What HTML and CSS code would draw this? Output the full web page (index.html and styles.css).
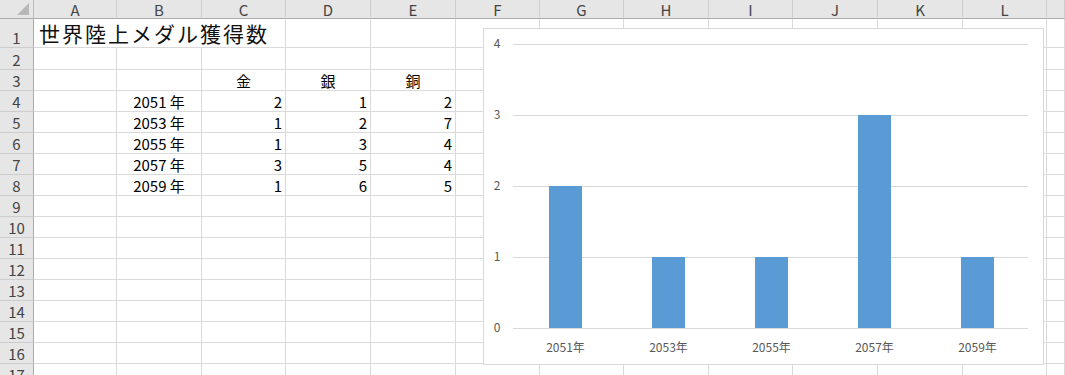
FILE: index.html
```html
<!DOCTYPE html>
<html lang="ja">
<head>
    <meta charset="UTF-8">
    <title>世界陸上メダル獲得数</title>
    <link rel="stylesheet" href="styles.css">
</head>
<body>
    <div class="sheet" id="sheet"></div>

    <!-- chart floats over the cells like an Excel chart object -->
    <div class="chart">
        <svg width="559" height="335" viewBox="0 0 559 335">
            <g class="grid">
                <line x1="29" y1="15.5" x2="544" y2="15.5"/>
                <line x1="29" y1="86.5" x2="544" y2="86.5"/>
                <line x1="29" y1="157.5" x2="544" y2="157.5"/>
                <line x1="29" y1="228.5" x2="544" y2="228.5"/>
                <line x1="29" y1="299.5" x2="544" y2="299.5"/>
            </g>
            <g class="ylab">
                <text x="13" y="19">4</text>
                <text x="13" y="90">3</text>
                <text x="13" y="161">2</text>
                <text x="13" y="232">1</text>
                <text x="13" y="303">0</text>
            </g>
            <g class="bars">
                <rect x="65" y="157" width="33" height="142"/>
                <rect x="168" y="228" width="33" height="71"/>
                <rect x="271" y="228" width="33" height="71"/>
                <rect x="374" y="86" width="33" height="213"/>
                <rect x="477" y="228" width="33" height="71"/>
            </g>
            <g class="xlab">
                <text x="81.5" y="323">2051年</text>
                <text x="184.5" y="323">2053年</text>
                <text x="287.5" y="323">2055年</text>
                <text x="390.5" y="323">2057年</text>
                <text x="493.5" y="323">2059年</text>
            </g>
        </svg>
    </div>

    <script>
        const cols = ['A', 'B', 'C', 'D', 'E', 'F', 'G', 'H', 'I', 'J', 'K', 'L', ''];

        // medal table: year, gold, silver, bronze
        const medals = [
            ['2051 年', 2, 1, 2],
            ['2053 年', 1, 2, 7],
            ['2055 年', 1, 3, 4],
            ['2057 年', 3, 5, 4],
            ['2059 年', 1, 6, 5]
        ];

        const sheet = document.getElementById('sheet');

        function addCell(cls, text) {
            const cell = document.createElement('div');
            cell.className = cls;
            if (text !== undefined) cell.textContent = text;
            sheet.appendChild(cell);
            return cell;
        }

        // column headers
        addCell('corner');
        cols.forEach(c => addCell('colhead', c));

        for (let r = 1; r <= 17; r++) {
            addCell('rowhead', r);

            if (r === 1) {
                // title overflows across A:C
                addCell('cell title', '世界陸上メダル獲得数');
                cols.slice(3).forEach(() => addCell('cell'));
                continue;
            }

            const row = medals[r - 4];
            cols.forEach((c, i) => {
                if (r === 3 && i >= 2 && i <= 4) {
                    addCell('cell ctr', ['金', '銀', '銅'][i - 2]);
                } else if (row && i === 1) {
                    addCell('cell ctr', row[0]);
                } else if (row && i >= 2 && i <= 4) {
                    addCell('cell num', row[i - 1]);
                } else {
                    addCell('cell');
                }
            });
        }
    </script>
</body>
</html>
```

FILE: styles.css
```css
body {
    margin: 0;
    background: #fff;
    font-family: "Noto Sans CJK JP", "Noto Sans", sans-serif;
    color: #000;
    position: relative;
    overflow: hidden;
    height: 375px;
}

/* Spreadsheet grid */
.sheet {
    display: grid;
    grid-template-columns: 34px 83px 85px 84px 85px 85px 84px 84px 85px 84px 85px 85px 84px 1fr;
    grid-template-rows: 19px 29px 22px;
    grid-auto-rows: 21px;
}

.sheet > div {
    box-sizing: border-box;
    overflow: hidden;
    white-space: nowrap;
}

.corner {
    position: relative;
    background: #e6e6e6;
    border-right: 1px solid #bdbdbd;
    border-bottom: 1px solid #ababab;
}

/* little select-all triangle */
.corner::after {
    content: '';
    position: absolute;
    right: 4px;
    bottom: 3px;
    width: 0;
    height: 0;
    border-style: solid;
    border-width: 0 0 12px 12px;
    border-color: transparent transparent #b8b8b8 transparent;
}

.colhead {
    background: #e6e6e6;
    border-right: 1px solid #cdcdcd;
    border-bottom: 1px solid #ababab;
    font-size: 15px;
    line-height: 19px;
    color: #444;
    text-align: center;
}

.rowhead {
    background: #e6e6e6;
    border-right: 1px solid #ababab;
    border-bottom: 1px solid #cdcdcd;
    font-size: 15px;
    color: #444;
    display: flex;
    align-items: flex-end;
    justify-content: center;
    line-height: 19px;
}

.cell {
    border-right: 1px solid #dadada;
    border-bottom: 1px solid #dadada;
    font-size: 15px;
    line-height: 19px;
    display: flex;
    align-items: flex-end;
    padding: 0 3px 0 3px;
}

.cell.num {
    justify-content: flex-end;
}

.cell.ctr {
    justify-content: center;
}

.cell.title {
    grid-column: span 3;
    font-size: 21px;
    letter-spacing: 2px;
    line-height: 27px;
    padding-left: 5px;
    color: #111;
}

/* Chart object */
.chart {
    position: absolute;
    left: 483px;
    top: 28px;
    width: 561px;
    height: 337px;
    box-sizing: border-box;
    border: 1px solid #d9d9d9;
    background: #fff;
}

.chart svg {
    display: block;
}

.grid line {
    stroke: #d9d9d9;
    stroke-width: 1;
}

.bars rect {
    fill: #5b9bd5;
}

.ylab text,
.xlab text {
    font-family: "Noto Sans CJK JP", "Noto Sans", sans-serif;
    font-size: 12px;
    fill: #595959;
    text-anchor: middle;
}
```
